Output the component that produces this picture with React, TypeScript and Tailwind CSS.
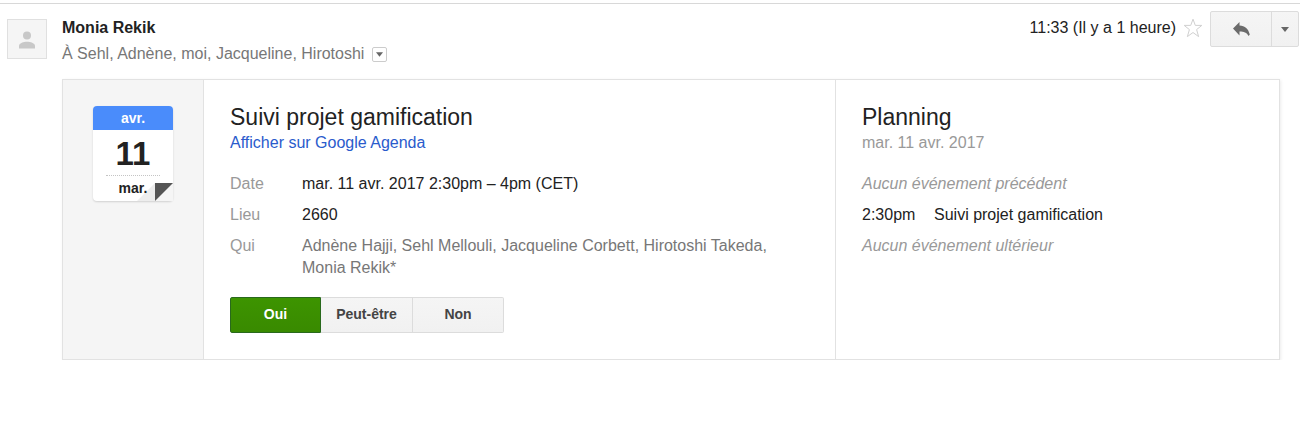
import type { ReactNode } from 'react';

const details = [
  { label: 'Date', value: 'mar. 11 avr. 2017 2:30pm – 4pm (CET)', tone: 'text-[#222222]' },
  { label: 'Lieu', value: '2660', tone: 'text-[#222222]' },
  {
    label: 'Qui',
    value: 'Adnène Hajji, Sehl Mellouli, Jacqueline Corbett, Hirotoshi Takeda, Monia Rekik*',
    tone: 'text-[#777777]',
  },
];

function Avatar() {
  return (
    <div className="mt-[15px] flex size-10 shrink-0 items-center justify-center border border-[#e0e0e0] bg-[#f5f5f5]">
      <svg viewBox="0 0 16 18" className="mt-0.5 h-[18px] w-4" fill="#c8c8c8" aria-hidden="true">
        <circle cx="8" cy="4.500" r="4" />
        <path d="M0 17.500v-2.500c0-2.800 4.600-4.200 8-4.200s8 1.400 8 4.200v2.500z" />
      </svg>
    </div>
  );
}

function Caret({ className }: { className: string }) {
  return (
    <svg viewBox="0 0 8 5" className={className} fill="#666666" aria-hidden="true">
      <path d="M0 0h8L4 5z" />
    </svg>
  );
}

function MessageHeader() {
  return (
    <header className="flex items-start">
      <Avatar />
      <div className="mt-3 ml-[15px] flex-1">
        <h1 className="font-bold leading-6">Monia Rekik</h1>
        <div className="mt-0.5 flex items-center gap-2 leading-6 text-[#777777]">
          <span>À Sehl, Adnène, moi, Jacqueline, Hirotoshi</span>
          <button
            type="button"
            aria-label="Afficher les détails"
            className="flex size-[15px] items-center justify-center rounded-xs border border-[#cccccc] bg-white"
          >
            <Caret className="h-[5px] w-[7px]" />
          </button>
        </div>
      </div>
      <div className="mt-[7px] mr-px flex items-start">
        <time className="leading-[34px]">11:33 (Il y a 1 heure)</time>
        <button type="button" aria-label="Suivre" className="mx-[7px] mt-[7px]">
          <svg viewBox="0 0 20 20" className="size-5" fill="#ffffff" stroke="#d0d0d0" aria-hidden="true">
            <path d="M10 1.200l2.300 6.200h6.500l-5.200 4.200 2 7-5.600-4.100-5.600 4.100 2-7-5.200-4.200h6.500z" />
          </svg>
        </button>
        <div className="flex h-9 rounded-xs border border-[#dcdcdc] bg-linear-to-b from-[#f5f5f5] to-[#f1f1f1]">
          <button
            type="button"
            aria-label="Répondre"
            className="flex w-[61px] items-center justify-center border-r border-[#dcdcdc]"
          >
            <svg viewBox="0 0 17 15" className="h-[15px] w-[17px]" fill="#6b6b6b" aria-hidden="true">
              <path d="M0 6.500L6.500 0v3.400c5.500 0 9 3.500 10.300 9.200l-1.300 1.300c-1.800-3.200-4.500-4.300-9-4.300v3.900z" />
            </svg>
          </button>
          <button type="button" aria-label="Plus" className="flex w-[26px] items-center justify-center">
            <Caret className="h-[5px] w-2" />
          </button>
        </div>
      </div>
    </header>
  );
}

function CalendarTile() {
  return (
    <div className="relative h-[95px] w-20 rounded-[4px] bg-white text-center text-sm font-bold shadow-[0_1px_2px_rgba(0,0,0,0.15)]">
      <div className="h-6 rounded-t-[4px] bg-[#4a8cfb] leading-6 text-white">avr.</div>
      <div className="mx-[13px] h-[46px] border-b border-dotted border-[#c4c4c4] text-[33px] leading-[48px]">
        11
      </div>
      <div className="leading-6">mar.</div>
      <svg viewBox="0 0 36 18" className="absolute right-0 bottom-0 h-[18px] w-9" aria-hidden="true">
        <path d="M18 0v18H0z" fill="#000000" fillOpacity="0.07" />
        <path d="M36 0v18H18z" fill="#f5f5f5" />
        <path d="M18 0h18L18 18z" fill="#555555" />
      </svg>
    </div>
  );
}

function PanelTitle({ children }: { children: ReactNode }) {
  return <h2 className="text-[23px] leading-[26px]">{children}</h2>;
}

function EventDetails() {
  return (
    <section className="flex-1 px-[26px] pt-6 pb-[26px]">
      <PanelTitle>Suivi projet gamification</PanelTitle>
      <a href="#agenda" className="block w-fit leading-[26px] text-[#2a5bcc]">
        Afficher sur Google Agenda
      </a>
      <dl className="mt-[17px] flex max-w-[560px] flex-col gap-[9px] leading-[22px]">
        {details.map(({ label, value, tone }) => (
          <div key={label} className="flex">
            <dt className="w-[72px] shrink-0 text-[#999999]">{label}</dt>
            <dd className={tone}>{value}</dd>
          </div>
        ))}
      </dl>
      <div className="mt-[18px] flex text-sm font-bold text-[#444444]" role="group" aria-label="Participation">
        <button
          type="button"
          className="h-9 w-[91px] rounded-l-xs border border-[#29691d] bg-linear-to-b from-[#3d9400] to-[#398a00] pb-0.5 text-white"
        >
          Oui
        </button>
        <button
          type="button"
          className="h-9 w-[92px] border-y border-r border-[#dcdcdc] bg-linear-to-b from-[#f5f5f5] to-[#f1f1f1] pb-0.5"
        >
          Peut-être
        </button>
        <button
          type="button"
          className="h-9 w-[91px] rounded-r-xs border-y border-r border-[#dcdcdc] bg-linear-to-b from-[#f5f5f5] to-[#f1f1f1] pb-0.5"
        >
          Non
        </button>
      </div>
    </section>
  );
}

function Schedule() {
  return (
    <section className="w-[444px] shrink-0 border-l border-[#e2e2e2] px-[26px] pt-6">
      <PanelTitle>Planning</PanelTitle>
      <p className="leading-[26px] text-[#999999]">mar. 11 avr. 2017</p>
      <ul className="mt-[17px] flex flex-col gap-[9px] leading-[22px]">
        <li className="italic text-[#999999]">Aucun événement précédent</li>
        <li className="flex">
          <time className="w-[72px] shrink-0">2:30pm</time>
          <span>Suivi projet gamification</span>
        </li>
        <li className="italic text-[#999999]">Aucun événement ultérieur</li>
      </ul>
    </section>
  );
}

export default function App() {
  return (
    <main className="bg-white pt-[3px] pr-3.5 font-['Liberation_Sans',Arial,sans-serif] text-base text-[#222222]">
      <div className="border-t border-[#d8d8d8] pl-[7px]">
        <MessageHeader />
        <article className="mt-[13px] mr-5 ml-[55px] flex border border-[#e2e2e2] shadow-[1px_1px_3px_rgba(0,0,0,0.08)]">
          <div className="flex w-[141px] shrink-0 justify-center border-r border-[#e2e2e2] bg-[#f5f5f5] pt-[26px]">
            <CalendarTile />
          </div>
          <EventDetails />
          <Schedule />
        </article>
      </div>
    </main>
  );
}
